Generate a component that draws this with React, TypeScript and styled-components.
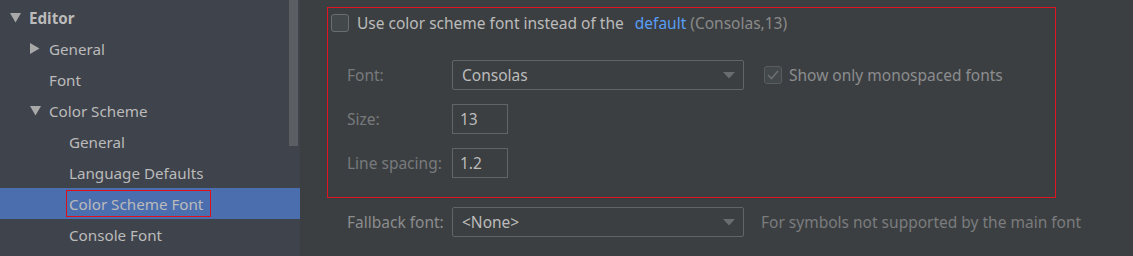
import React from "react";
import styled, { createGlobalStyle } from "styled-components";

const Global = createGlobalStyle`
  html, body { margin: 0; padding: 0; background: #3c3f41; }
  body { font-family: "Noto Sans", "Open Sans", sans-serif; }
`;

const Page = styled.div`
  display: flex;
  width: 1133px;
  height: 256px;
  overflow: hidden;
  background: #3c3f41;
`;

const Sidebar = styled.div`
  position: relative;
  width: 300px;
  flex: none;
  background: #3f434b;
  padding-top: 2px;
  box-sizing: border-box;
`;

const Thumb = styled.div`
  position: absolute;
  left: 289px;
  top: 0;
  width: 9px;
  height: 146px;
  background: #5b5e63;
`;

const Row = styled.div<{ $level: number; $selected?: boolean }>`
  display: flex;
  align-items: center;
  height: 31px;
  padding-left: ${(p) => 10 + p.$level * 20}px;
  background: ${(p) => (p.$selected ? "#4b6eaf" : "transparent")};
  color: #bbbbbb;
  font-size: 15.2px;
`;

const Arrow = styled.span`
  display: inline-flex;
  width: 19px;
  flex: none;
  align-items: center;
`;

const Spacer = styled.span`
  width: 19px;
  flex: none;
`;

const Label = styled.span<{ $bold?: boolean; $boxed?: boolean }>`
  font-weight: ${(p) => (p.$bold ? 700 : 400)};
  white-space: nowrap;
  ${(p) =>
    p.$boxed
      ? `display: inline-flex; align-items: center; box-sizing: border-box; height: 27px; border: 1px solid #e0101a; padding: 0 7px 0 2px; margin-left: -3px;`
      : ""}
`;

const Down = () => (
  <svg width="11" height="10" viewBox="0 0 11 10">
    <path d="M0 0 L11 0 L5.5 9.5 Z" fill="#a9a9a9" />
  </svg>
);
const Right = () => (
  <svg width="10" height="11" viewBox="0 0 10 11">
    <path d="M0 0 L9.5 5.5 L0 11 Z" fill="#a9a9a9" />
  </svg>
);

const Main = styled.div`
  flex: 1;
  padding: 7px 0 0 27px;
  color: #bbbbbb;
  font-size: 15.5px;
`;

const Group = styled.div`
  width: 729px;
  height: 191px;
  box-sizing: border-box;
  border: 1px solid #e0141e;
  padding: 6px 0 0 3px;
`;

const CheckRow = styled.div`
  display: flex;
  align-items: center;
  gap: 8px;
  height: 18px;
  white-space: nowrap;
`;

const Box = styled.span<{ $disabled?: boolean }>`
  display: inline-flex;
  align-items: center;
  justify-content: center;
  width: 18px;
  height: 18px;
  box-sizing: border-box;
  border: 1px solid ${(p) => (p.$disabled ? "#5a5d5f" : "#6b6e70")};
  border-radius: 3px;
  background: #43494a;
  flex: none;
`;

const Link = styled.span`
  color: #589df6;
  margin-left: 11px;
`;

const Muted = styled.span`
  color: #8a8a8a;
  margin-left: 4px;
`;

const Form = styled.div`
  display: grid;
  grid-template-columns: 105px auto 1fr;
  row-gap: 14px;
  align-items: center;
  padding: 28px 0 0 16px;
`;

const FieldLabel = styled.span<{ $dim?: boolean }>`
  color: ${(p) => (p.$dim ? "#777a7c" : "#8b8d8f")};
  white-space: nowrap;
`;

const Combo = styled.div`
  display: flex;
  align-items: center;
  justify-content: space-between;
  width: 292px;
  height: 30px;
  box-sizing: border-box;
  border: 1px solid #646464;
  border-radius: 2px;
  padding: 0 8px 0 9px;
  color: #bbbbbb;
`;

const Input = styled.div`
  width: 56px;
  height: 30px;
  box-sizing: border-box;
  border: 1px solid #646464;
  display: flex;
  align-items: center;
  padding-left: 7px;
  color: #bbbbbb;
`;

const Side = styled.div`
  display: flex;
  align-items: center;
  gap: 7px;
  margin-left: 20px;
  color: #8b8d8f;
  white-space: nowrap;
`;

const FallbackRow = styled.div`
  display: grid;
  grid-template-columns: 105px auto 1fr;
  align-items: center;
  margin-top: 9px;
  padding-left: 20px;
`;

const Hint = styled.span`
  color: #7a7c7e;
  margin-left: 17px;
  white-space: nowrap;
`;

const ComboArrow = () => (
  <svg width="12" height="7" viewBox="0 0 12 7">
    <path d="M0 0 L12 0 L6 6.5 Z" fill="#6a6c6e" />
  </svg>
);

const Check = () => (
  <svg width="12" height="10" viewBox="0 0 12 10">
    <path d="M1 5 L4.5 8.5 L11 1" stroke="#6c6e70" strokeWidth="1.6" fill="none" />
  </svg>
);

const tree = [
  { level: 0, label: "Editor", arrow: "down", bold: true },
  { level: 1, label: "General", arrow: "right" },
  { level: 1, label: "Font" },
  { level: 1, label: "Color Scheme", arrow: "down" },
  { level: 2, label: "General" },
  { level: 2, label: "Language Defaults" },
  { level: 2, label: "Color Scheme Font", selected: true },
  { level: 2, label: "Console Font" },
];

export default function App() {
  return (
    <Page>
      <Global />
      <Sidebar>
        {tree.map((t, i) => (
          <Row key={i} $level={t.level} $selected={t.selected}>
            {t.arrow ? (
              <Arrow>{t.arrow === "down" ? <Down /> : <Right />}</Arrow>
            ) : (
              <Spacer />
            )}
            <Label $bold={t.bold} $boxed={t.selected}>
              {t.label}
            </Label>
          </Row>
        ))}
        <Thumb />
      </Sidebar>
      <Main>
        <Group>
          <CheckRow>
            <Box />
            <span>
              Use color scheme font instead of the
              <Link>default</Link>
              <Muted>(Consolas,13)</Muted>
            </span>
          </CheckRow>
          <Form>
            <FieldLabel $dim>Font:</FieldLabel>
            <Combo>
              <span>Consolas</span>
              <ComboArrow />
            </Combo>
            <Side>
              <Box $disabled>
                <Check />
              </Box>
              <span>Show only monospaced fonts</span>
            </Side>
            <FieldLabel $dim>Size:</FieldLabel>
            <Input>13</Input>
            <span />
            <FieldLabel $dim>Line spacing:</FieldLabel>
            <Input>1.2</Input>
            <span />
          </Form>
        </Group>
        <FallbackRow>
          <FieldLabel>Fallback font:</FieldLabel>
          <Combo>
            <span>&lt;None&gt;</span>
            <ComboArrow />
          </Combo>
          <Hint>For symbols not supported by the main font</Hint>
        </FallbackRow>
      </Main>
    </Page>
  );
}
